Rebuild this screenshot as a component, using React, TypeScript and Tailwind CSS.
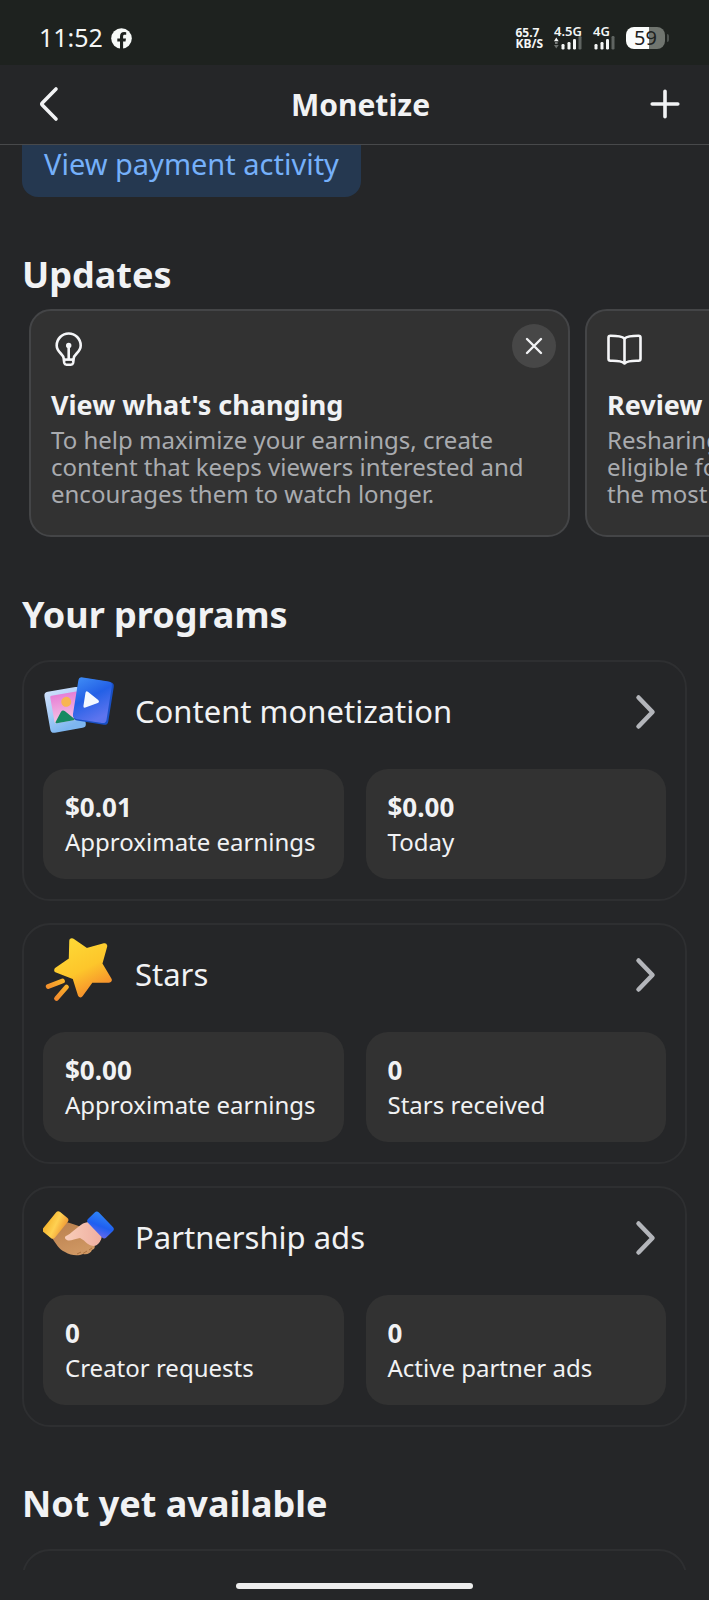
import type { ReactNode } from "react";

const updates = [
  {
    title: "View what's changing",
    lines: [
      "To help maximize your earnings, create",
      "content that keeps viewers interested and",
      "encourages them to watch longer.",
    ],
    icon: <BulbIcon />,
  },
  {
    title: "Review",
    lines: ["Resharing", "eligible for", "the most"],
    icon: <BookIcon />,
  },
];

const programs = [
  {
    title: "Content monetization",
    icon: <ContentIcon />,
    stats: [
      { value: "$0.01", label: "Approximate earnings" },
      { value: "$0.00", label: "Today" },
    ],
  },
  {
    title: "Stars",
    icon: <StarIcon />,
    stats: [
      { value: "$0.00", label: "Approximate earnings" },
      { value: "0", label: "Stars received" },
    ],
  },
  {
    title: "Partnership ads",
    icon: <HandshakeIcon />,
    stats: [
      { value: "0", label: "Creator requests" },
      { value: "0", label: "Active partner ads" },
    ],
  },
];

function BulbIcon() {
  return (
    <svg width="36" height="36" viewBox="0 0 36 36" fill="none" stroke="#f5f6f8" strokeWidth="2.6" strokeLinejoin="round">
      <path d="M12.700 27.500c0-4.500-7-6-7-13a12 12 0 0 1 24 0c0 7-7 8.500-7 13l-.6 4.500a2.300 2.300 0 0 1-2.200 1.700h-4.400a2.300 2.300 0 0 1-2.200-1.700z" />
      <path d="M13 28.600h9.500" />
      <path d="M17.700 15v13" />
      <circle cx="17.700" cy="14.500" r="2.700" fill="#f5f6f8" stroke="none" />
    </svg>
  );
}

function BookIcon() {
  return (
    <svg width="36" height="36" viewBox="0 0 36 36" fill="none" stroke="#f5f6f8" strokeWidth="2.600" strokeLinejoin="round">
      <path d="M17.500 7.500C14.500 5 9.500 4.800 3.500 4.800A2 2 0 0 0 1.500 6.800V27.800A2 2 0 0 0 3.500 29.800C9.500 29.600 14.500 29.800 17.500 32.500C20.500 29.800 25.500 29.600 31.500 29.800A2 2 0 0 0 33.500 27.800V6.800A2 2 0 0 0 31.500 4.800C25.500 4.800 20.500 5 17.500 7.500Z" />
      <path d="M17.500 7.500V32" />
    </svg>
  );
}

function ContentIcon() {
  return (
    <svg width="72" height="72" viewBox="0 0 72 72">
      <defs>
        <linearGradient id="frame" x1="0" y1="0" x2="0.300" y2="1">
          <stop offset="0" stopColor="#cfe0fb" />
          <stop offset="0.550" stopColor="#a9cdf8" />
          <stop offset="1" stopColor="#7db6f0" />
        </linearGradient>
        <linearGradient id="photo" x1="0" y1="0" x2="0" y2="1">
          <stop offset="0" stopColor="#e67fd6" />
          <stop offset="1" stopColor="#f6c4e4" />
        </linearGradient>
        <linearGradient id="video" x1="0" y1="0" x2="0.600" y2="1">
          <stop offset="0" stopColor="#3f8cf5" />
          <stop offset="0.500" stopColor="#2360e6" />
          <stop offset="1" stopColor="#5d74ee" />
        </linearGradient>
      </defs>
      <g transform="rotate(-10 23 40)">
        <rect x="4.500" y="17" width="36" height="41.500" rx="4" fill="url(#frame)" />
        <rect x="10" y="21.500" width="28" height="28" rx="1.500" fill="url(#photo)" />
        <circle cx="25" cy="30" r="5" fill="#f8b552" />
        <path d="M11 48l7-9q2-2.200 4.200 0l7.800 9q.8 1.500-1 1.500H12q-1.800 0-1-1.500z" fill="#168a62" />
      </g>
      <g transform="rotate(9 51 31)">
        <rect x="33" y="8" width="35" height="43" rx="4" fill="#1950c4" />
        <rect x="32" y="7.500" width="34" height="42" rx="4" fill="url(#video)" />
        <path d="M41 22.500q0-2.600 2.200-1.600l11.500 6.500q2 1.600 0 3l-11.500 6.500q-2.200 1-2.200-1.600z" fill="#f4f9ff" />
      </g>
    </svg>
  );
}

function StarIcon() {
  return (
    <svg width="72" height="72" viewBox="0 0 72 72">
      <defs>
        <linearGradient id="star" x1="0.200" y1="0" x2="0.700" y2="1">
          <stop offset="0" stopColor="#fdd835" />
          <stop offset="0.550" stopColor="#fdc62b" />
          <stop offset="1" stopColor="#f58a2c" />
        </linearGradient>
        <linearGradient id="trail" x1="1" y1="0" x2="0" y2="1">
          <stop offset="0" stopColor="#fbb829" />
          <stop offset="1" stopColor="#ef7f2f" />
        </linearGradient>
      </defs>
      <path
        d="M29 6L43.500 16L61.500 11L56.500 29L66 45L48 45L37.500 59.500L32 42L14 35L28.500 25Z"
        fill="url(#star)"
        stroke="url(#star)"
        strokeWidth="5.500"
        strokeLinejoin="round"
      />
      <path d="M5.200 51.500L19.500 46M13.500 63.500L23.500 52" fill="none" stroke="url(#trail)" strokeWidth="4.800" strokeLinecap="round" />
    </svg>
  );
}

function HandshakeIcon() {
  return (
    <svg width="72" height="72" viewBox="0 0 72 72">
      <defs>
        <linearGradient id="cuffLeft" x1="0.300" y1="0" x2="0.700" y2="1">
          <stop offset="0" stopColor="#f6b731" />
          <stop offset="0.500" stopColor="#ffd152" />
          <stop offset="1" stopColor="#f2a33a" />
        </linearGradient>
        <linearGradient id="cuffRight" x1="0" y1="0" x2="0.800" y2="1">
          <stop offset="0" stopColor="#2f86f6" />
          <stop offset="0.600" stopColor="#1f5ff0" />
          <stop offset="1" stopColor="#5a67ee" />
        </linearGradient>
        <linearGradient id="handDark" x1="0" y1="0" x2="0.400" y2="1">
          <stop offset="0" stopColor="#b97f4c" />
          <stop offset="1" stopColor="#cf9763" />
        </linearGradient>
        <linearGradient id="handLight" x1="0" y1="0.500" x2="1" y2="0.500">
          <stop offset="0" stopColor="#f8cdb9" />
          <stop offset="1" stopColor="#efaea0" />
        </linearGradient>
      </defs>
      <path d="M9 40L23 24C28 25 33 27 38 29L50 45C53 48 52 51 49 52C48 55 44 57 40 56C36 58 28 58 22 54C15 51 13 45 9 40Z" fill="url(#handDark)" />
      <path d="M23 38C28 36 34 29 40 25.500C43 24 46 24 47 24L59 38C58 43 56 46 53 47.500C49 49 44 46 41 42.500L37 40C32 41 28 43 25 42.500C22 41.500 21 39 23 38Z" fill="url(#handLight)" />
      <path d="M34 56L38 54M40 55.500L44 53M46 52L49 50" stroke="#ab713f" strokeWidth="1" fill="none" />
      <rect x="-13" y="-7.500" width="26" height="15" rx="3" transform="translate(12.500 27) rotate(-51)" fill="url(#cuffLeft)" />
      <rect x="-13" y="-7.500" width="26" height="15" rx="3" transform="translate(57.500 27) rotate(46)" fill="url(#cuffRight)" />
    </svg>
  );
}

function ChevronIcon() {
  return (
    <svg width="22" height="36" viewBox="0 0 22 36" fill="none" stroke="#b3b5ba" strokeWidth="4.500" strokeLinecap="round" strokeLinejoin="round">
      <path d="M3.500 3.500L17.500 18L3.500 32.500" />
    </svg>
  );
}

function StrengthBars() {
  return (
    <g fill="#f4f6f5">
      <rect x="7.500" y="8" width="3" height="5.500" rx="1.200" />
      <rect x="13.500" y="6" width="3" height="7.500" rx="1.200" />
      <rect x="19" y="3" width="3" height="10.500" rx="1.200" />
      <rect x="24.500" y="0" width="3" height="13.500" rx="1.200" fill="#5f6461" />
    </g>
  );
}

function StatusBar() {
  return (
    <div className="flex h-[65px] shrink-0 items-center justify-between bg-[#1e221f] pt-[11px] pr-10 pl-[39px] text-[#f4f6f5]">
      <div className="flex items-center gap-2">
        <span className="text-[25px]">11:52</span>
        <svg width="21" height="21" viewBox="0 0 21 21">
          <circle cx="10.500" cy="10.500" r="10.300" fill="#f7faf8" />
          <path d="M9 21v-7.500H6.300v-3H9V8.300c0-2.900 1.600-4.300 4.200-4.300l2 .2v2.600h-1.400c-1.300 0-1.700.7-1.700 1.600v2.100H15l-.5 3h-2.400V21z" fill="#1e221f" />
        </svg>
      </div>
      <div className="flex items-center gap-[11px]">
        <div className="text-xs leading-[11px] font-bold">
          <div>65.7</div>
          <div>KB/S</div>
        </div>
        <div className="text-[13px] leading-[9px] font-semibold">
          <div>4.5G</div>
          <svg width="28" height="14" viewBox="0 0 28 14">
            <path d="M2.300 1.500l2.400 3.700H0z" fill="#f4f6f5" />
            <rect x="1" y="6.200" width="2.600" height="1.600" fill="#8f9391" />
            <path d="M2.300 12.500L0 9h4.700z" fill="#6c716e" />
            <StrengthBars />
          </svg>
        </div>
        <div className="text-[13px] leading-[9px] font-semibold">
          <div>4G</div>
          <svg width="22" height="14" viewBox="6 0 22 14">
            <StrengthBars />
          </svg>
        </div>
        <div className="flex items-center gap-[2px]">
          <div className="flex h-[22px] w-[39px] items-center justify-center rounded-lg bg-linear-to-r from-[#fbfdfc] from-60% to-[#70756f] to-60% text-xl leading-5 text-[#1e221f]">
            59
          </div>
          <div className="h-2 w-[2px] rounded-r-sm bg-[#4c514e]" />
        </div>
      </div>
    </div>
  );
}

function Header() {
  return (
    <header className="flex h-20 shrink-0 items-center justify-between border-b border-[#48494b] px-7 pb-px">
      <button aria-label="Back" className="flex w-11 justify-center">
        <svg width="24" height="36" viewBox="0 0 24 36" fill="none" stroke="#f1f2f4" strokeWidth="3.600" strokeLinecap="round" strokeLinejoin="round">
          <path d="M18 3L4.500 16.700q-1.300 1.300 0 2.600L18 33" />
        </svg>
      </button>
      <h1 className="text-[30px] font-bold">Monetize</h1>
      <button aria-label="Add" className="flex w-8 justify-center">
        <svg width="30" height="30" viewBox="0 0 30 30" stroke="#f1f2f4" strokeWidth="3.600" strokeLinecap="round">
          <path d="M15 2.200v25.600M2.200 15h25.600" />
        </svg>
      </button>
    </header>
  );
}

function SectionTitle({ children }: { children: ReactNode }) {
  return <h2 className="px-[22px] text-4xl leading-10 font-bold">{children}</h2>;
}

function UpdateCard({ title, lines, icon }: { title: string; lines: string[]; icon: ReactNode }) {
  return (
    <article className="relative w-[541px] shrink-0 rounded-[22px] border-2 border-[#444547] bg-[#323232] px-5 pt-5 pb-7">
      {icon}
      <h3 className="mt-5 text-[27px] leading-9 font-bold">{title}</h3>
      <p className="mt-[3px] text-2xl leading-[27px] whitespace-nowrap text-[#a9abaf]">
        {lines.map((line) => (
          <span key={line} className="block">
            {line}
          </span>
        ))}
      </p>
      <button aria-label="Dismiss" className="absolute top-[13px] right-3 flex size-11 items-center justify-center rounded-full bg-[#474747]">
        <svg width="18" height="18" viewBox="0 0 18 18" stroke="#f1f2f4" strokeWidth="2.400" strokeLinecap="round">
          <path d="M2 2l14 14M16 2L2 16" />
        </svg>
      </button>
    </article>
  );
}

function ProgramCard({ title, icon, stats }: (typeof programs)[number]) {
  return (
    <article className="rounded-[28px] border-2 border-[#2e2f31] px-[19px] pt-[10px] pb-5">
      <a href="#" className="flex items-center pr-[9px]">
        {icon}
        <h3 className="ml-5 flex-1 pt-[6px] text-[31px] leading-10">{title}</h3>
        <span className="pt-2">
          <ChevronIcon />
        </span>
      </a>
      <div className="mt-[25px] grid grid-cols-2 gap-[22px]">
        {stats.map((stat) => (
          <div key={stat.label} className="rounded-[22px] bg-[#323232] px-[22px] pt-5 pb-5">
            <div className="text-[26px] leading-9 font-bold">{stat.value}</div>
            <div className="text-2xl leading-[34px]">{stat.label}</div>
          </div>
        ))}
      </div>
    </article>
  );
}

export default function App() {
  return (
    <div className="flex h-screen flex-col overflow-hidden bg-[#252628] font-['Noto_Sans',sans-serif] text-[#f1f2f4]">
      <StatusBar />
      <Header />
      <main className="min-h-0 flex-1 overflow-y-auto [scrollbar-width:none]">
        <button className="ml-[22px] block rounded-b-2xl bg-[#253850] px-[22px] pt-[3px] pb-[17px] text-[29px] leading-8 text-[#75b0fa]">
          View payment activity
        </button>

        <section className="pt-[58px]">
          <SectionTitle>Updates</SectionTitle>
          <div className="mt-[14px] flex gap-[15px] overflow-x-auto px-[29px] [scrollbar-width:none]">
            {updates.map((update) => (
              <UpdateCard key={update.title} {...update} />
            ))}
          </div>
        </section>

        <section className="pt-[58px]">
          <SectionTitle>Your programs</SectionTitle>
          <div className="mt-[25px] flex flex-col gap-[22px] px-[22px]">
            {programs.map((program) => (
              <ProgramCard key={program.title} {...program} />
            ))}
          </div>
        </section>

        <section className="pt-[57px]">
          <SectionTitle>Not yet available</SectionTitle>
          <div className="mx-[22px] mt-[25px] h-60 rounded-[28px] border-2 border-[#2e2f31]" />
        </section>
      </main>
      <footer className="flex h-[30px] shrink-0 justify-center pt-[13px]">
        <div className="h-[6px] w-1/3 rounded-full bg-[#ededed]" />
      </footer>
    </div>
  );
}
